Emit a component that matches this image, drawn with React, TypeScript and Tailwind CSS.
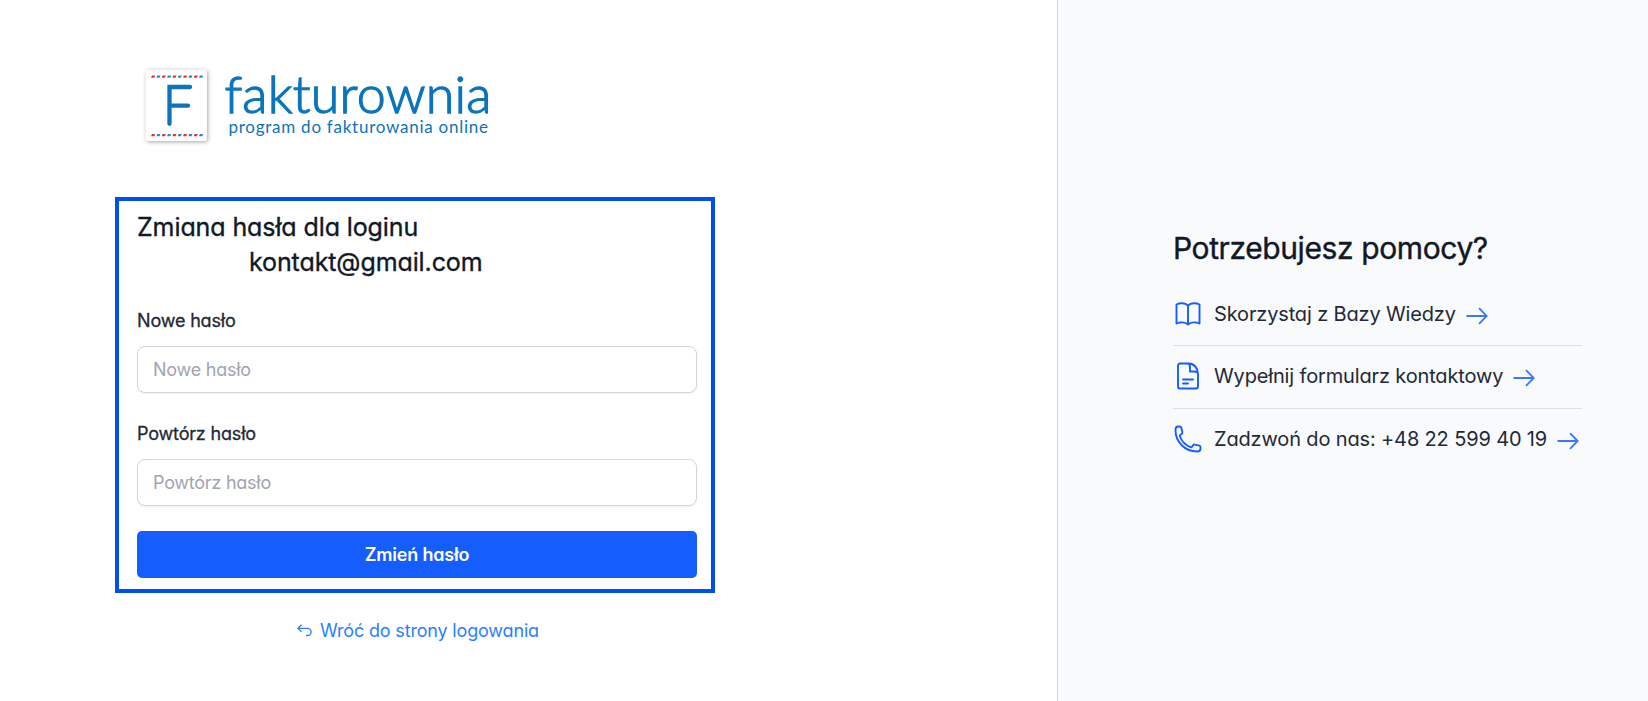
import type { InputHTMLAttributes, ReactNode } from "react";

type FieldProps = InputHTMLAttributes<HTMLInputElement> & { label: string };

const STRIPES = [0, 1, 2, 3, 4, 5, 6, 7, 8, 9];

function Logo() {
  return (
    <svg width="360" height="90" viewBox="0 0 360 90" className="block">
      <rect x="8.7" y="6.8" width="61.2" height="71.2" rx="2.5" fill="#fff" className="drop-shadow-[1px_1px_2px_rgba(0,0,0,0.35)]" />
      {STRIPES.map((i) => (
        <g key={i} fill={i % 2 ? "#2a86c6" : "#ee2b3b"} transform={`translate(${14 + i * 5.33} 0)`}>
          <path d="M0.9 12.4H4.1L3.3 14.8H0.1Z" />
          <path d="M0.9 70.9H4.1L3.3 73.3H0.1Z" />
        </g>
      ))}
      <path d="M53 24H32.5V60.8M32.5 42.7H51" fill="none" stroke="#0b74bd" strokeWidth="4.3" strokeLinecap="round" />
      <text
        x="87.5"
        y="50"
        textLength="267"
        fill="#0b74bd"
        stroke="#0b74bd"
        strokeWidth="1.3"
        className="font-['Lato',sans-serif] text-[52px] font-light"
      >
        fakturownia
      </text>
      <text x="91.5" y="70" textLength="259.5" fill="#0b74bd" className="font-['Lato',sans-serif] text-[17px]">
        program do fakturowania online
      </text>
    </svg>
  );
}

function Field({ label, ...props }: FieldProps) {
  return (
    <label className="block">
      <span className="block text-[18px] leading-7 tracking-[-0.17px] text-[#1f2937] [-webkit-text-stroke:0.3px]">{label}</span>
      <input
        {...props}
        className="mt-[11px] block h-[47px] w-full rounded-lg border border-gray-300 bg-white px-[15px] text-[18px] tracking-[-0.25px] text-[#1f2937] shadow-xs placeholder:text-[#a0a4b0]"
      />
    </label>
  );
}

function ArrowIcon() {
  return (
    <svg width="22" height="18" viewBox="0 0 22 18" fill="none" stroke="#3b76ff" strokeWidth="1.8" className="mt-1 ml-2.5">
      <path d="M0.5 9h20M13 1.2L20.7 9L13 16.8" />
    </svg>
  );
}

function HelpLink({ icon, children }: { icon: ReactNode; children: ReactNode }) {
  return (
    <li className="flex h-[63px] items-center border-t border-[#dedfe2] pb-[2px] first:border-t-0 first:pb-0">
      <svg
        width="30"
        height="30"
        viewBox="0 0 30 30"
        fill="none"
        stroke="#155dfc"
        strokeWidth="1.9"
        strokeLinejoin="round"
        strokeLinecap="round"
        className="shrink-0"
      >
        {icon}
      </svg>
      <a href="#" className="ml-[11px] flex items-center text-[20px] tracking-[-0.15px] whitespace-nowrap text-[#1f2937]">
        {children}
        <ArrowIcon />
      </a>
    </li>
  );
}

export default function App() {
  return (
    <div className="flex h-[701px] bg-white font-['Inter',sans-serif] [font-feature-settings:'cv11']">
      <main className="w-[1057px] pl-[115px]">
        <div className="pt-[63px] pl-[22px]">
          <Logo />
        </div>

        <form className="mt-[44px] h-[396px] w-[600px] border-4 border-[#004fe8] pt-[9px] pr-[14px] pl-[18px]">
          <h1 className="text-[25px] leading-[35px] tracking-[-0.1px] text-[#111827] [-webkit-text-stroke:0.35px]">
            Zmiana hasła dla loginu
            <span className="block pl-[112px]">kontakt@gmail.com</span>
          </h1>
          <div className="mt-[27px] space-y-[27px]">
            <Field label="Nowe hasło" type="password" placeholder="Nowe hasło" />
            <Field label="Powtórz hasło" type="password" placeholder="Powtórz hasło" />
          </div>
          <button
            type="button"
            className="mt-[25px] h-[47px] w-full rounded-[5px] bg-[#155dfc] text-[18px] font-semibold tracking-[-0.2px] text-white"
          >
            Zmień hasło
          </button>
        </form>

        <a
          href="#"
          className="mt-[24px] flex w-[606px] items-center justify-center gap-2 text-[18px] leading-7 tracking-[-0.17px] text-[#2b7fff]"
        >
          <svg width="15" height="14" viewBox="0 0 15 14" fill="none" stroke="#2b7fff" strokeWidth="1.3">
            <path d="M4.5 0.800L1 4.300L4.500 7.800M1 4.300H10.500A3.600 3.600 0 0 1 10.500 11.500H9" />
          </svg>
          Wróć do strony logowania
        </a>
      </main>

      <aside className="flex-1 border-l border-[#d1d5db] bg-[#f9fafc] pl-[115px]">
        <h2 className="mt-[228px] text-[30px] leading-10 tracking-[-0.4px] text-[#111827] [-webkit-text-stroke:0.4px]">
          Potrzebujesz pomocy?
        </h2>
        <ul className="mt-[14px] w-[409px]">
          <HelpLink icon={<path d="M15 6.500C12 3.800 7 3.500 3.500 5.500V24.500C7 22.800 12 23 15 25.500C18 23 23 22.800 26.500 24.500V5.500C23 3.500 18 3.800 15 6.500V25" />}>
            Skorzystaj z Bazy Wiedzy
          </HelpLink>
          <HelpLink icon={<path d="M15.500 2.500H7A2 2 0 0 0 5 4.500V25.500A2 2 0 0 0 7 27.500H23A2 2 0 0 0 25 25.500V13C25 7 21 2.500 15.500 2.500C17 3 17 5 17 10.500H21C24 10.500 25 12 25 13M10 18.500H20M10 22.500H15" />}>
            Wypełnij formularz kontaktowy
          </HelpLink>
          <HelpLink icon={<path d="M2.500 6C2.500 18 12 27.500 24 27.500C26 27.500 27.500 26.500 27.500 24.500V23.200C27.500 22.400 27 21.900 26.300 21.700L21.800 20.600C21.200 20.400 20.600 20.600 20.200 21.100L19 22.700C18.700 23.200 18 23.300 17.500 23.100C12.500 21.200 8.800 17.500 6.900 12.500C6.700 12 6.800 11.300 7.300 11L8.900 9.800C9.400 9.400 9.600 8.800 9.400 8.200L8.300 3.700C8.100 3 7.600 2.500 6.800 2.500H5C3.500 2.500 2.500 4 2.500 6Z" />}>
            Zadzwoń do nas: +48 22 599 40 19
          </HelpLink>
        </ul>
      </aside>
    </div>
  );
}
